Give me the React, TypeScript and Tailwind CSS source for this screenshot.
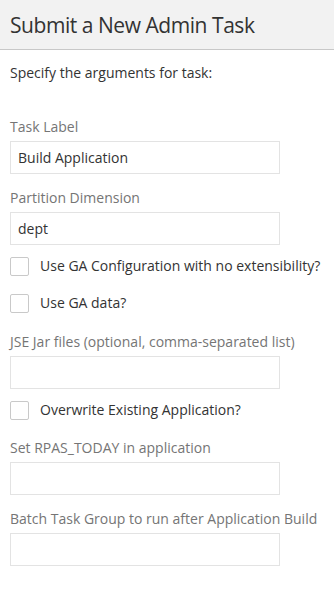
import React from "react";

const font = { fontFamily: '"Open Sans", "Noto Sans", sans-serif' };

function Field({ label, value, className = "" }: { label: string; value?: string; className?: string }) {
  return (
    <div className={"flex flex-col " + className}>
      <div className="text-[14px] leading-[20px] text-[#757575]">{label}</div>
      <div className="mt-[4px] h-[33px] w-[270px] border border-[#e3e3e3] bg-white px-[7px] flex items-center text-[14px] text-[#333]">
        {value}
      </div>
    </div>
  );
}

function Check({ label, className = "" }: { label: string; className?: string }) {
  return (
    <div className={"flex items-center " + className}>
      <div className="h-[19px] w-[19px] rounded-[2px] border border-[#c9c9c9] bg-white" />
      <div className="ml-[11px] text-[14px] leading-[20px] text-[#333]">{label}</div>
    </div>
  );
}

export default function App() {
  return (
    <div className="w-[334px] h-[590px] bg-white overflow-hidden" style={font}>
      <div className="h-[50px] bg-[#f2f2f2] border-b border-[#c8c8c8] px-[10px] flex items-center">
        <h1 className="text-[21px] leading-[30px] tracking-[-0.45px] text-[#333] font-normal">Submit a New Admin Task</h1>
      </div>
      <div className="px-[10px] flex flex-col">
        <div className="mt-[13px] text-[14px] leading-[20px] text-[#333]">Specify the arguments for task:</div>
        <Field className="mt-[34px]" label="Task Label" value="Build Application" />
        <Field className="mt-[14px]" label="Partition Dimension" value="dept" />
        <Check className="mt-[11px]" label="Use GA Configuration with no extensibility?" />
        <Check className="mt-[17px]" label="Use GA data?" />
        <Field className="mt-[19px]" label="JSE Jar files (optional, comma-separated list)" />
        <Check className="mt-[11px]" label="Overwrite Existing Application?" />
        <Field className="mt-[18px]" label="Set RPAS_TODAY in application" />
        <Field className="mt-[14px]" label="Batch Task Group to run after Application Build" />
      </div>
    </div>
  );
}
